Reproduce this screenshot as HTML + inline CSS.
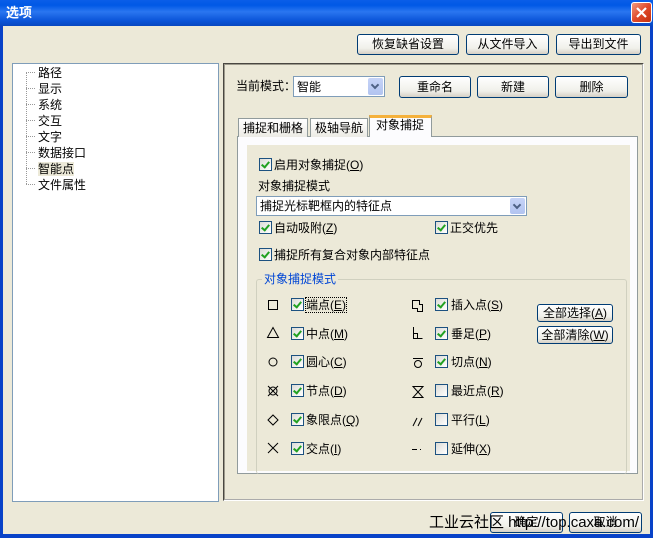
<!DOCTYPE html>
<html><head><meta charset="utf-8">
<style>
*{box-sizing:border-box;margin:0;padding:0}
body{width:653px;height:538px;overflow:hidden;position:relative;background:#ece9d8;font-family:"Liberation Sans","Noto Sans CJK SC","WenQuanYi Zen Hei",sans-serif;font-size:12px;color:#000}
.a{position:absolute}
.t{position:absolute;white-space:nowrap;line-height:14px}
.btn{position:absolute;border:1px solid #003c74;border-radius:3px;background:linear-gradient(#fff,#f0f0ea 70%,#d6d0c5);text-align:center;white-space:nowrap;font-size:12px}
.cb{position:absolute;width:13px;height:13px;border:1px solid #1c5180;background:linear-gradient(135deg,#dcdcd7,#fff)}
.cb.on::after{content:"";position:absolute;left:3px;top:1px;width:3px;height:6px;border:solid #21a121;border-width:0 2px 2px 0;transform:rotate(40deg)}
.combo{position:absolute;background:#fff;border:1px solid #7f9db9}
.combo .ar{position:absolute;right:1px;top:1px;bottom:1px;width:15px;background:linear-gradient(#c6d3f7,#b2c4f0);border-radius:2px}
.combo .ar::after{content:"";position:absolute;left:4px;top:4px;width:4px;height:4px;border:solid #4d6185;border-width:0 2px 2px 0;transform:rotate(45deg)}
u{text-decoration:underline}
</style></head><body>
<!-- frame -->
<div class="a" style="left:0;top:0;width:653px;height:26px;background:linear-gradient(#0a5ee8,#0058e6 20%,#2a76f0 45%,#0a54d8 80%,#0847c0)"></div>
<div class="t" style="left:6px;top:6px;color:#fff;font-weight:bold;font-size:13px">选项</div>
<div class="a" style="left:631px;top:2px;width:21px;height:21px;background:linear-gradient(135deg,#f09a80,#e04a2a 50%,#c43010);border:1px solid #fff;border-radius:3px"></div>
<svg class="a" style="left:631px;top:2px" width="21" height="21"><path d="M6 6L15 15M15 6L6 15" stroke="#fff" stroke-width="2.2"/></svg>
<div class="a" style="left:0;top:26px;width:3px;height:512px;background:#0842c8"></div>
<div class="a" style="right:0;top:26px;width:3px;height:512px;background:#0842c8"></div>
<div class="a" style="left:0;top:534px;width:653px;height:4px;background:#0842c8"></div>

<div class="btn" style="left:357px;top:34px;width:102px;height:21px;line-height:19px">恢复缺省设置</div>
<div class="btn" style="left:466px;top:34px;width:83px;height:21px;line-height:19px">从文件导入</div>
<div class="btn" style="left:556px;top:34px;width:85px;height:21px;line-height:19px">导出到文件</div>

<!-- tree -->
<div class="a" style="left:12px;top:63px;width:207px;height:439px;background:#fff;border:1px solid #7f9db9"></div>
<div class="a" style="left:26px;top:72px;width:0;height:112px;border-left:1px dotted #999"></div>
<div class="t" style="left:38px;top:65px;line-height:16px;font-size:12px">路径<br>显示<br>系统<br>交互<br>文字<br>数据接口<br><span style="background:#ece9d8">智能点</span><br>文件属性</div>
<svg class="a" style="left:26px;top:64px" width="12" height="130">
<g stroke="#999" stroke-dasharray="1 1"><path d="M0 8.5H10M0 24.5H10M0 40.5H10M0 56.5H10M0 72.5H10M0 88.5H10M0 104.5H10M0 120.5H10"/></g></svg>

<!-- right panel -->
<div class="a" style="left:223px;top:63px;width:421px;height:438px;border:2px groove #f5f3ea;border-color:#9d9a8c #fff #fff #9d9a8c"></div>
<div class="t" style="left:236px;top:79px">当前模式：</div>
<div class="combo" style="left:293px;top:76px;width:92px;height:21px"><div class="t" style="left:3px;top:3px">智能</div><div class="ar"></div></div>
<div class="btn" style="left:399px;top:76px;width:72px;height:22px;line-height:20px">重命名</div>
<div class="btn" style="left:477px;top:76px;width:72px;height:22px;line-height:20px">新建</div>
<div class="btn" style="left:555px;top:76px;width:73px;height:22px;line-height:20px">删除</div>

<!-- tabs -->
<div class="a" style="left:237px;top:136px;width:401px;height:338px;background:#fcfcfe;border:1px solid #919b9c"></div>
<div class="a" style="left:238px;top:118px;width:70px;height:19px;border:1px solid #919b9c;border-bottom:none;background:linear-gradient(#fff,#ecebe5)"></div>
<div class="t" style="left:243px;top:121px">捕捉和栅格</div>
<div class="a" style="left:310px;top:118px;width:58px;height:19px;border:1px solid #919b9c;border-bottom:none;background:linear-gradient(#fff,#ecebe5)"></div>
<div class="t" style="left:315px;top:121px">极轴导航</div>
<div class="a" style="left:369px;top:115px;width:63px;height:22px;border:1px solid #919b9c;border-top:3px solid #f5b13c;border-bottom:none;background:#fcfcfe"></div>
<div class="t" style="left:376px;top:118px">对象捕捉</div>
<div class="a" style="left:247px;top:145px;width:383px;height:326px;background:#ece9d8"></div>

<div class="cb on" style="left:259px;top:158px"></div>
<div class="t" style="left:274px;top:158px">启用对象捕捉(<u>O</u>)</div>
<div class="t" style="left:258px;top:179px">对象捕捉模式</div>
<div class="combo" style="left:256px;top:196px;width:271px;height:20px"><div class="t" style="left:3px;top:2px">捕捉光标靶框内的特征点</div><div class="ar"></div></div>
<div class="cb on" style="left:259px;top:221px"></div>
<div class="t" style="left:274px;top:221px">自动吸附(<u>Z</u>)</div>
<div class="cb on" style="left:435px;top:221px"></div>
<div class="t" style="left:450px;top:221px">正交优先</div>
<div class="cb on" style="left:259px;top:248px"></div>
<div class="t" style="left:274px;top:248px">捕捉所有复合对象内部特征点</div>

<!-- group -->
<div class="a" style="left:256px;top:279px;width:371px;height:195px;border:1px solid #d0d0bf;border-bottom:none;border-radius:3px"></div>
<div class="t" style="left:262px;top:272px;color:#0046d5;background:#ece9d8;padding:0 2px">对象捕捉模式</div>

<svg class="a" style="left:262px;top:294px" width="170" height="166" fill="none" stroke="#000" stroke-width="1">
<rect x="6.5" y="6.5" width="9" height="9"/>
<path d="M5.5 43.5L11 33.5L16.5 43.5Z"/>
<circle cx="11" cy="68" r="4"/>
<circle cx="11" cy="97" r="4"/><path d="M6 92L16 102M16 92L6 102"/>
<path d="M11 121L16 126L11 131L6 126Z"/>
<path d="M6 149L16 159M16 149L6 159"/>
<path d="M150 6.5H157.5V10.5H160.5V17.5H155.5V14.5H150.5V6.5"/>
<path d="M151.5 33V44.5H160.5M151.5 39.5H155.5V44.5"/>
<circle cx="156" cy="70" r="3.5"/><path d="M151 64.5H161"/>
<path d="M151 92.5H161L151 103.5H161Z"/>
<path d="M151 132L155 124M156 132L160 124"/>
<path d="M150 155.5H155M158 155.5H159"/>
</svg>

<div class="cb on" style="left:291px;top:298px"></div><div class="t" style="left:306px;top:298px;outline:1px dotted #000">端点(<u>E</u>)</div>
<div class="cb on" style="left:291px;top:327px"></div><div class="t" style="left:306px;top:327px">中点(<u>M</u>)</div>
<div class="cb on" style="left:291px;top:355px"></div><div class="t" style="left:306px;top:355px">圆心(<u>C</u>)</div>
<div class="cb on" style="left:291px;top:384px"></div><div class="t" style="left:306px;top:384px">节点(<u>D</u>)</div>
<div class="cb on" style="left:291px;top:413px"></div><div class="t" style="left:306px;top:413px">象限点(<u>Q</u>)</div>
<div class="cb on" style="left:291px;top:442px"></div><div class="t" style="left:306px;top:442px">交点(<u>I</u>)</div>

<div class="cb on" style="left:435px;top:298px"></div><div class="t" style="left:451px;top:298px">插入点(<u>S</u>)</div>
<div class="cb on" style="left:435px;top:327px"></div><div class="t" style="left:451px;top:327px">垂足(<u>P</u>)</div>
<div class="cb on" style="left:435px;top:355px"></div><div class="t" style="left:451px;top:355px">切点(<u>N</u>)</div>
<div class="cb" style="left:435px;top:384px"></div><div class="t" style="left:451px;top:384px">最近点(<u>R</u>)</div>
<div class="cb" style="left:435px;top:413px"></div><div class="t" style="left:451px;top:413px">平行(<u>L</u>)</div>
<div class="cb" style="left:435px;top:442px"></div><div class="t" style="left:451px;top:442px">延伸(<u>X</u>)</div>

<div class="btn" style="left:537px;top:304px;width:76px;height:18px;line-height:16px">全部选择(<u>A</u>)</div>
<div class="btn" style="left:537px;top:326px;width:76px;height:18px;line-height:16px">全部清除(<u>W</u>)</div>

<!-- bottom -->
<div class="btn" style="left:490px;top:512px;width:73px;height:21px;line-height:19px">确定</div>
<div class="btn" style="left:569px;top:512px;width:73px;height:21px;line-height:19px">取消</div>
<div class="t" style="left:429px;top:514px;font-size:15px;line-height:18px">工业云社区 http://top.caxa.com/</div>
</body></html>
